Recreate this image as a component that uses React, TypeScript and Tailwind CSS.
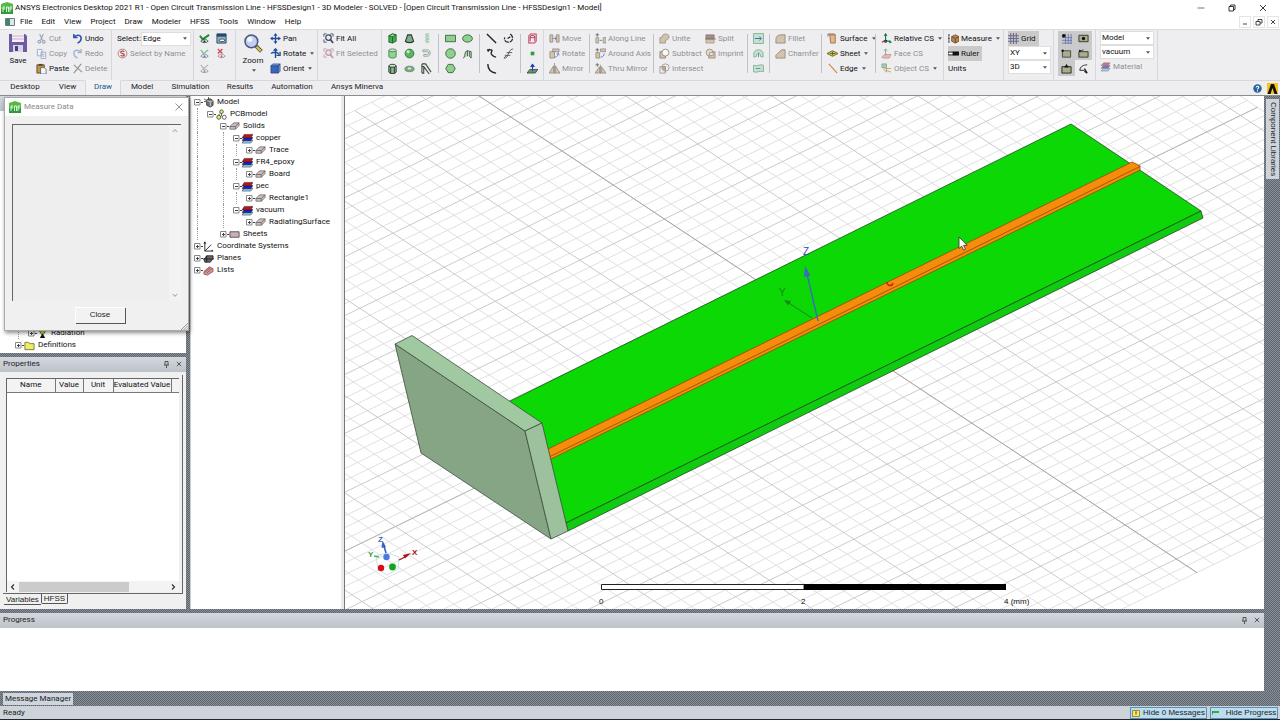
import React from "react";

const K = "#222";
const G = "#8ed08e";
const T = "#d3c3ad";

const solidIcon = (
  <g stroke="#555" strokeWidth=".7" fill="#c9bcbc">
    <path d="M1 9V6l4-4h6v3L7 9z" />
    <path d="M1 6h6v3M7 6l4-4" fill="none" />
  </g>
);

const icons: Record<string, React.ReactNode> = {
  cut: <g fill="none" stroke="#9aa7b8" strokeWidth="1.2"><path d="M4 1l3 7M8 1L5 8" /><circle cx="3.6" cy="9.5" r="1.5" /><circle cx="8.4" cy="9.5" r="1.5" /></g>,
  copy: <g fill="#eef2fa" stroke="#9fabc0"><path d="M1.500 1.500h5v7h-5zM5.500 4.500h5v7h-5z" /><path d="M7 7h2M7 9h2" /></g>,
  paste: <g><path d="M1 2h8v9H1z" fill="#c9982f" stroke="#333" strokeWidth=".8" /><path d="M3 1h4v2H3z" fill="#444" /><path d="M5 5h4l2 2v5H5z" fill="#f4f4ff" stroke="#445" strokeWidth=".7" /></g>,
  undo: <path d="M2 1v4h4M2 5c3-4 8-3 8 1 0 3-2 4-4 5" fill="none" stroke="#2b55b0" strokeWidth="1.7" />,
  redo: <path d="M10 1v4H6M10 5C7 1 2 2 2 6c0 3 2 4 4 5" fill="none" stroke="#a4b6d3" strokeWidth="1.600" />,
  del: <path d="M2 2l9 8M10 1L2 11" fill="none" stroke="#909090" strokeWidth="1.200" />,
  byname: <g fill="none"><circle cx="6" cy="6" r="4.800" stroke="#b06a6a" strokeWidth=".9" /><path d="M8 4c-1-1-4-1-4 .6S8 6 8 7.500 5 9 4 8" stroke="#a33" strokeWidth="1.200" /></g>,
  eyeOn: <g fill="none"><path d="M1 3l3 4 7-5" stroke="#1d8a3c" strokeWidth="2.200" /><path d="M2 9c2-3 6-3 8 0-2 2-6 2-8 0z" stroke="#2d5a3c" /><circle cx="6" cy="9" r="1.200" fill="#234" /></g>,
  eyeWin: <g><path d="M1 1h10v10H1z" fill="#8fb5c9" stroke="#234a66" /><path d="M1 1h10v3H1z" fill="#234a66" /><path d="M3 8c2-2 5-2 7 0-2 2-5 2-7 0z" fill="#fff" stroke="#222" strokeWidth=".8" /></g>,
  eyeGreen: <g fill="none"><path d="M2 2l3 4 5-4" stroke="#83c59a" strokeWidth="1.600" /><path d="M2 9c2-3 6-3 8 0-2 2-6 2-8 0z" stroke="#789" /><circle cx="6" cy="9" r="1" fill="#678" /></g>,
  eyeRed: <g fill="none"><path d="M2 1l5 5M7 1L2 6" stroke="#d0525e" strokeWidth="1.600" /><path d="M2 9c2-3 6-3 8 0-2 2-6 2-8 0z" stroke="#a88" /><circle cx="6" cy="9" r="1" fill="#a66" /></g>,
  eyeGray: <g fill="none"><path d="M2 2l3 4 5-4" stroke="#b5a8b2" strokeWidth="1.200" /><path d="M2 9c2-3 6-3 8 0-2 2-6 2-8 0z" stroke="#999" /><circle cx="6" cy="9" r="1" fill="#888" /></g>,
  pan: <g fill="#1f4e9a"><path d="M5.300 2h1.400v8H5.300zM2 5.300h8v1.400H2z" /><path d="M6 0l2.200 3H3.800zM6 12l2.200-3H3.800zM0 6l3-2.200v4.400zM12 6L9 3.800v4.400z" /></g>,
  rotate: <g fill="none" stroke="#1f4e9a" strokeWidth="1.500"><path d="M6 1v10M1 6c3-2 7-2 9 1" /><path d="M4 3l2-2 2 2M11 4v4H7" /></g>,
  orient: <g stroke="#1d3c78" strokeWidth=".7"><path d="M1 3h8v8H1z" fill="#3a68b8" /><path d="M1 3l2-2h8L9 3zM9 3l2-2v8l-2 2z" fill="#7a9cd8" /></g>,
  fitall: <g fill="none" stroke="#39465c"><path d="M1 4V1h3M8 1h3v3M1 7v3h3" strokeWidth=".9" /><circle cx="6" cy="5" r="3" strokeWidth="1.300" /><path d="M8 7l3 4" strokeWidth="1.800" /></g>,
  fitsel: <g fill="none" stroke="#bd9aa4"><path d="M1 4V1h3M8 1h3v3M1 7v3h3" strokeWidth=".9" /><circle cx="6" cy="5" r="3" strokeWidth="1.300" fill="#f0dde2" /><path d="M8 7l3 4" strokeWidth="1.800" /></g>,
  box: <g stroke="#174f1d" strokeWidth=".8"><path d="M2 3l4-2 4 1v7l-4 2-4-1z" fill="#3fae4a" /><path d="M2 3l4 1 4-2-4-1z" fill="#a9e3a9" /><path d="M6 4v7" /></g>,
  cone: <path d="M4 2h4l2.500 7c-2 2-7 2-9 0z" fill="#7fae87" stroke="#2c3c2e" strokeWidth="1.200" />,
  helix: <g fill="none" stroke="#a8cdae" strokeWidth="1.200"><path d="M9 1c-5 0-6 2 0 2M9 4c-5 0-6 2 0 2M9 7c-5 0-6 2 0 2M9 10H5" /></g>,
  cyl: <g stroke="#2f6b35" strokeWidth=".8"><path d="M2 2.500v7c1 2 7 2 8 0v-7" fill="#8fd495" /><ellipse cx="6" cy="2.500" rx="4" ry="1.500" fill="#cdeccd" /></g>,
  sphere: <g><circle cx="6" cy="6" r="4.800" fill="#56b661" stroke="#206128" strokeWidth=".8" /><circle cx="4.500" cy="4" r="1.700" fill="#c4efc6" /></g>,
  uturn: <path d="M2 2h5c4 0 4 7 0 7H3V7h4c2 0 2-3 0-3H2z" fill="#dfe8df" stroke="#93a896" />,
  prism: <g stroke={K} strokeWidth=".9" fill="#86bd8b"><path d="M2 3v7l2 1.500h4L10 10V3" /><path d="M2 3l2-1.500h4L10 3 8 4.500H4z" fill="#cfe8cf" /><path d="M4 4.500v7M8 4.500v7" /></g>,
  torus: <g><ellipse cx="6" cy="6.500" rx="5" ry="3" fill="#7fa886" stroke="#6e8a72" /><ellipse cx="6" cy="6" rx="2" ry="1" fill="#dcefdc" /></g>,
  bend: <path d="M1 1h4l6 9M1 1v10M1 4h2l6 8M1 11h2V5" fill="none" stroke="#3c4b3e" strokeWidth="1.200" />,
  rect: <path d="M.5 2.500h11v7H.5z" fill={G} stroke="#2e5a30" strokeWidth=".9" />,
  ellipse: <ellipse cx="6" cy="6" rx="5.300" ry="4" fill={G} stroke="#2e5a30" strokeWidth=".9" />,
  circle: <circle cx="6" cy="6" r="5.200" fill={G} stroke="#2e5a30" strokeWidth=".9" />,
  curveSheet: <g fill="#a9d6a9" stroke="#4b5b4c" strokeWidth="1"><path d="M1 11c3 0 1-8 5-8v6M6 3l4 1v7L8 9V4" /></g>,
  hexagon: <path d="M3.500 1.500h5L11.200 6l-2.700 4.500h-5L.8 6z" fill={G} stroke="#2e5a30" strokeWidth=".9" />,
  line: <path d="M1 1l10 10" stroke={K} strokeWidth="1.500" />,
  spiralc: <path d="M8 1c4 3 3 9-2 9-4 0-5-3-4-5M5 6l3-2" fill="none" stroke={K} strokeWidth="1.400" strokeDasharray="5 1" />,
  spline: <path d="M1 2h5c2 1-2 3 0 5s3 3 5 3M2 4l2-3" fill="none" stroke={K} strokeWidth="1.500" />,
  eq: <path d="M1 11c6 1 3-9 10-10M2 8h6M4 5l6 0M1 11l3-3" fill="none" stroke="#555" />,
  arc: <path d="M2 1c0 5 3 9 9 10" fill="none" stroke={K} strokeWidth="1.500" />,
  region: <g fill="none" stroke="#c23a58" strokeWidth="1.100"><path d="M2 3l2-2h6v8l-2 2H2z" /><ellipse cx="6" cy="4" rx="2.500" ry="1.200" /><path d="M3.500 4v5M8.500 4v5" /></g>,
  point: <path d="M4 4h4v4H4z" fill="#2f9c3f" />,
  plane: <g><path d="M0 11l3-4h9l-3 4z" fill="#5f9a66" stroke="#222" strokeWidth=".7" /><path d="M6 9V2M4 4l2-3 2 3z" stroke="#2336b8" fill="#2336b8" /></g>,
  move: <g fill={T} stroke="#8d8478" strokeWidth=".8"><path d="M1 2h3v8H1zM8 2h3v8H8z" /><path d="M4 6h4M6 4l2 2-2 2" stroke="#6870c8" fill="none" /></g>,
  rot: <g fill={T} stroke="#8d8478" strokeWidth=".8"><path d="M1 4h5v7H1zM4 1h7v3H4z" /><path d="M6 10c3 0 4-2 4-4M8 7l2-2 1 3" stroke="#5a62cc" fill="none" /></g>,
  mirror: <g fill={T} stroke="#8d8478" strokeWidth=".8"><path d="M5 3v8H0zM7 3v8h5z" /><path d="M6 0v12" /></g>,
  dupLine: <g fill={T} stroke="#7f9a84" strokeWidth=".8"><path d="M1 5h3v6H1zM9 5h3v6H9z" /><path d="M2.500 0v4M.5 2h4" stroke="#555" /><path d="M5 8h3" stroke="#4a52cc" /></g>,
  dupAxis: <g fill={T} stroke="#8d8478" strokeWidth=".8"><path d="M1 5h4v6H1zM6 1h6v3H6z" /><path d="M2.500 0v4M.5 2h4" stroke="#555" /><path d="M6 10c3 0 4-2 4-4" stroke="#4a52cc" fill="none" /></g>,
  dupMirror: <g fill={T} stroke="#8d8478" strokeWidth=".8"><path d="M5 4v7H0zM7 4v7h5z" /><path d="M6 2v10" /><path d="M2.500 0v4M.5 2h4" stroke="#555" /></g>,
  unite: <path d="M1 5h2c0-5 8-5 8-1 0 3-3 4-4 4v3H1z" fill={T} stroke="#9a8f80" strokeWidth=".9" />,
  subtract: <g stroke="#8a8378" strokeWidth=".9"><path d="M1 4h6v7H1z" fill={T} /><circle cx="7" cy="5" r="3.800" fill="#fafafa" /></g>,
  intersect: <g stroke="#9a9388" strokeWidth=".9"><circle cx="7" cy="5" r="4" fill="#eee" /><path d="M1 4h6v7H1z" fill="none" /><path d="M4 4h3v4c-2 0-3-2-3-4z" fill="#c6ae90" /></g>,
  split: <g strokeWidth=".8"><path d="M1 2h9v4H1z" fill="#a08f80" stroke="#877" /><path d="M1 7h9v4H1z" fill={T} stroke="#a98" /><path d="M0 6.500h12" stroke="#666" /></g>,
  imprint: <g stroke="#9a8f80" strokeWidth=".9"><path d="M4 4h7v7H4z" fill={T} /><circle cx="5" cy="5" r="3.800" fill="#e3d9ca" /><path d="M5 5h4v3H5z" fill="#f5f0e8" /></g>,
  sheetA: <g><path d="M.5.500h11v11H.5z" fill="#c3e3cd" stroke="#86b096" /><path d="M2 6h7M7 4l2 2-2 2" stroke="#4460c0" fill="none" /></g>,
  sheetB: <g fill="#c3e3cd" stroke="#86b096"><path d="M1 10V5c2-4 8-4 10 0v5l-3-1V7c-1-1-3-1-4 0v2z" /><path d="M6 5v5" stroke="#6a80c8" /></g>,
  sheetC: <g fill="#c3e3cd" stroke="#86b096"><path d="M.5 2.500c4 2 7-2 11 0v7c-4-2-7 2-11 0z" /><path d="M3 6h5" stroke="#6a80c8" /></g>,
  fillet: <path d="M1 11V7c0-3 2-5 5-5h5v9z" fill={T} stroke="#8f8678" strokeWidth=".9" />,
  chamfer: <path d="M1 11V8l6-6h4v9z" fill={T} stroke="#8f8678" strokeWidth=".9" />,
  surface: <g stroke="#7d5a35" strokeWidth=".8"><path d="M3 2h6v9H4z" fill="#e7b988" /><path d="M3 2L1 1v3M9 2L8 1H2" fill="none" /></g>,
  sheet: <path d="M0 6l6-3 6 3-6 3zM3 6h6M6 4v4" fill="#d8ce50" stroke="#59521a" strokeWidth=".9" />,
  edge: <path d="M2 1l9 10" stroke="#c48a3a" strokeWidth="1.200" />,
  rcs: <g fill="none" strokeWidth="1.300"><path d="M5 8V1M3.500 3L5 1l1.500 2" stroke="#1d7a50" /><path d="M5 8l6 2M9 8l2 2-2 1" stroke="#1b8a3a" /><path d="M5 8l-4 2" stroke="#c02020" /><circle cx="5" cy="9" r="1" stroke="#236" /></g>,
  fcs: <g fill="none" strokeWidth="1"><path d="M1 10l3-3h7l-2 4H2z" fill="#e8b9b0" stroke="#c99" /><path d="M5 8V1M3.500 3L5 1l1.500 2" stroke="#7aa890" /></g>,
  ocs: <g fill="none" strokeWidth="1"><path d="M1 1h5v4H1zM2 6l4 4" fill="#a8d0a8" stroke="#8a9" /><path d="M6 10V4M6 8l5 2M4 6h7" stroke="#c9a06a" /></g>,
  measure: <g stroke="#5a3d1c" strokeWidth=".8"><path d="M1 2v8M0 2h2M0 10h2M0 6h2" stroke="#333" /><path d="M4 4l4-2 4 2v5l-4 2-4-2z" fill="#b98650" /><path d="M4 4l4 2 4-2M8 6v5" fill="none" /></g>,
  ruler: <g><path d="M0 4.500h11.500v3H0z" fill="#fff" stroke="#111" /><path d="M5 4h7v4H5z" fill="#111" /></g>,
  grid: <g strokeWidth="1"><path d="M3 0v12M6 0v12M9 0v12" stroke="#8a4a6a" /><path d="M0 3h12M0 6h12M0 9h12" stroke="#4a6aa0" /></g>,
  snapGrid: <g strokeWidth="1"><path d="M5 1v11M8 1v11M11 1v11M1 5h11M1 8h11M1 11h11" stroke="#5868a8" strokeWidth=".8" /><circle cx="3" cy="3" r="2" fill="#111" /></g>,
  snapCenter: <g><path d="M1 2.500h10v7H1z" fill="#a9ad88" stroke="#333" /><circle cx="6" cy="6" r="1.800" fill="#111" /></g>,
  snapVertex: <g><path d="M1.500 3h9v7h-9z" fill="#a9ad88" stroke="#444" /><circle cx="1.800" cy="3" r="1.300" fill="#111" /></g>,
  snapEdge: <g><path d="M1 4h10v6H1z" fill="#a9ad88" stroke="#333" /><path d="M1 4l5-2" stroke="#333" /><circle cx="2" cy="3" r="1" fill="#111" /></g>,
  snapFace: <g><path d="M1 4h10v7H1z" fill="#a9ad88" stroke="#222" /><path d="M6 1l2.500 4h-5z" fill="#111" /></g>,
  snapArc: <g fill="none" stroke="#222"><path d="M2 8c0-4 4-6 8-6M2 8h5" /><path d="M7 6l3 5M7 9l3 2" strokeWidth="1.500" /></g>,
  material: <g strokeWidth=".5" stroke="#777"><path d="M1 11l3-3h7l-2 3z" fill="#a9c8e6" /><path d="M1 8l3-3h7L9 8z" fill="#6f78c8" /><path d="M1 5l3-3h7L9 5z" fill="#d8707a" /></g>,
  matTree: <g strokeWidth=".5" stroke="#111"><path d="M0 11l2.500-3H12l-2.500 3z" fill="#8fd0f5" /><path d="M0 8.500L2.500 5H12L9.500 8.500z" fill="#1a22c8" /><path d="M0 5.500L2.500 1.500H12L9.500 5.500z" fill="#b01818" /></g>,
  solid: solidIcon,
  sheets: <path d="M1 3h10v6H1z" fill="#cbb0b4" stroke="#444" strokeWidth=".9" />,
  modelTree: <g stroke="#222" strokeWidth=".8"><path d="M4 3l4-1 3 2v5l-3 2-4-2z" fill="#777" /><path d="M1 2l3 2M1 5h3M6 0v3" /><path d="M4 4l4 1 3-1M8 5v5" fill="none" stroke="#ddd" /></g>,
  pcb: <g stroke="#333" strokeWidth=".8"><circle cx="6" cy="3" r="2" fill="#e8e860" /><circle cx="3" cy="9" r="2.200" fill="#e8e860" /><circle cx="9" cy="9" r="2.200" fill="#fff" /><path d="M6 5v3M4 5L3 7" /></g>,
  csTree: <path d="M2 1v10h9M2 11l7-7M1 3l1-2 1 2M9 10l2 1" fill="none" stroke={K} strokeWidth="1" />,
  planes: <g stroke="#111" strokeWidth=".8"><path d="M1 7l3-4h7v3L8 10H2z" fill="#666" /><path d="M0 6.500h12M4 3v7" /></g>,
  lists: <g stroke="#733" strokeWidth=".7"><path d="M1 7l6-5 4 2v3l-6 4-4-1z" fill="#d89a9a" /><path d="M2 8l6-5M4 9l6-5" /></g>,
  radiation: <g><path d="M2 2h8L7 7H5z" fill="#d8d820" stroke="#222" strokeWidth=".7" /><path d="M3 11l3-5 3 5z" fill="#111" /></g>,
  folder: <path d="M1 10.500V2.500h4l1 1.500h5v6.500z" fill="#f0ee60" stroke="#6b6a30" strokeWidth=".9" />,
};

function Ic({ n }: { n: string }) {
  return (
    <svg viewBox="0 0 12 12" className="size-[11px] shrink-0" aria-hidden="true">
      {icons[n]}
    </svg>
  );
}

const Caret = () => (
  <svg viewBox="0 0 6 4" className="ml-[2px] h-[3px] w-[4px] shrink-0" aria-hidden="true">
    <path d="M0 0h6L3 4z" fill="#555" />
  </svg>
);

type Item = { i?: string; t: string; off?: boolean; c?: boolean; on?: boolean };

function Tool({ i, t, off, c, on }: Item) {
  return (
    <button
      type="button"
      className={`flex h-[15px] items-center gap-[2px] whitespace-nowrap ${off ? "text-[#8f8f8f]" : "text-[#111]"} ${on ? "bg-[#cacaca] pr-[3px]" : ""}`}
    >
      {i && <Ic n={i} />}
      {t}
      {c && <Caret />}
    </button>
  );
}

function Col({ items, w }: { items: Item[]; w: string }) {
  return (
    <div className={`flex shrink-0 flex-col items-start ${w}`}>
      {items.map((x) => (
        <Tool key={x.t} {...x} />
      ))}
    </div>
  );
}

function IconGrid({ rows, label }: { rows: string[][]; label: string }) {
  return (
    <div className="flex shrink-0 flex-col" role="group" aria-label={label}>
      {rows.map((r, k) => (
        <div key={k} className="flex">
          {r.map((n) => (
            <button type="button" key={n} aria-label={n} className="flex h-[15px] w-[17px] items-center justify-center">
              <Ic n={n} />
            </button>
          ))}
        </div>
      ))}
    </div>
  );
}

const Bar = () => <div className="mt-[3px] h-[39px] w-px shrink-0 bg-[#bfc3c9]" />;

function Group({ children, w }: { children: React.ReactNode; w: string }) {
  return <div className={`flex shrink-0 border-r border-[#d5d7dc] pt-px ${w}`}>{children}</div>;
}

function Pick({ label, options, w }: { label: string; options: string[]; w: string }) {
  return (
    <div className={`relative flex h-[14px] items-center border border-[#dedede] bg-white ${w}`}>
      <select aria-label={label} className="h-full w-full appearance-none bg-transparent pl-px text-[#111] outline-none">
        {options.map((o) => (
          <option key={o}>{o}</option>
        ))}
      </select>
      <span className="pointer-events-none absolute right-[3px]">
        <Caret />
      </span>
    </div>
  );
}

function Logo() {
  return (
    <svg viewBox="0 0 12 12" className="size-[12px] shrink-0" aria-hidden="true">
      <path d="M0 2l6-2 6 2v10H0z" fill="#58b947" />
      <path d="M0 7h12v5H0z" fill="#2f9a3c" />
      <path d="M2 5v5M2 5h2M2 7h2M5.500 10V5h2v5M9 10V5h2M9 7h2" stroke="#e8ffe8" strokeWidth=".9" fill="none" />
    </svg>
  );
}

function Ribbon() {
  return (
    <div className="flex h-[51px] shrink-0 overflow-hidden border-t border-[#dcdcdf] bg-[#eeeef1]">
      <Group w="w-[112px]">
        <button type="button" className="flex w-[36px] flex-col items-center gap-[3px] pt-[3px] text-[#111]">
          <svg viewBox="0 0 18 18" className="size-[18px]" aria-hidden="true">
            <path d="M0 0h16l2 2v16H0z" fill="#6d5ba8" />
            <path d="M3 0h12v8H3z" fill="#f3eff8" />
            <path d="M3 2h12M3 5h12" stroke="#d9a9c8" />
            <path d="M4 11h10v7H4z" fill="#d5d5e4" />
            <path d="M6 12h3v5H6z" fill="#4d4080" />
          </svg>
          Save
        </button>
        <Col w="w-[36px]" items={[{ i: "cut", t: "Cut", off: true }, { i: "copy", t: "Copy", off: true }, { i: "paste", t: "Paste" }]} />
        <Col w="w-[38px]" items={[{ i: "undo", t: "Undo" }, { i: "redo", t: "Redo", off: true }, { i: "del", t: "Delete", off: true }]} />
      </Group>
      <Group w="w-[82px]">
        <div className="flex flex-col pl-[5px]">
          <div className="flex h-[15px] items-center text-[#111]">
            <span className="w-[24px]">Select:</span>
            <Pick label="Select" options={["Edge", "Face", "Object"]} w="w-[50px]" />
          </div>
          <Tool i="byname" t="Select by Name" off />
        </div>
      </Group>
      <Group w="w-[42px]">
        <div className="pl-[2px]">
          <IconGrid label="Visibility" rows={[["eyeOn", "eyeWin"], ["eyeGreen", "eyeRed"], ["eyeGray"]]} />
        </div>
      </Group>
      <Group w="w-[82px]">
        <button type="button" className="flex w-[34px] flex-col items-center gap-[3px] pt-[3px] text-[#111]">
          <svg viewBox="0 0 18 18" className="size-[19px]" aria-hidden="true">
            <circle cx="7" cy="7" r="6" fill="#c3cff2" stroke="#4a5a86" strokeWidth="1.500" />
            <circle cx="5.500" cy="5" r="2.500" fill="#f2f6ff" />
            <path d="M11.500 11.500l5 5" stroke="#5d5530" strokeWidth="3.600" />
            <path d="M12 12l4 4" stroke="#d8c860" strokeWidth="2" />
          </svg>
          <span className="leading-[10px]">Zoom</span>
          <Caret />
        </button>
        <Col w="w-[46px]" items={[{ i: "pan", t: "Pan" }, { i: "rotate", t: "Rotate", c: true }, { i: "orient", t: "Orient", c: true }]} />
      </Group>
      <Group w="w-[64px]">
        <div className="pl-[5px]">
          <Col w="w-[58px]" items={[{ i: "fitall", t: "Fit All" }, { i: "fitsel", t: "Fit Selected", off: true }]} />
        </div>
      </Group>
      <Group w="w-[162px]">
        <div className="flex gap-[3px] pl-[2px]">
          <IconGrid label="Draw solids" rows={[["box", "cone", "helix"], ["cyl", "sphere", "uturn"], ["prism", "torus", "bend"]]} />
          <Bar />
          <IconGrid label="Draw sheets" rows={[["rect", "ellipse"], ["circle", "curveSheet"], ["hexagon"]]} />
          <Bar />
          <IconGrid label="Draw lines" rows={[["line", "spiralc"], ["spline", "eq"], ["arc"]]} />
          <Bar />
          <IconGrid label="Region" rows={[["region"], ["point"], ["plane"]]} />
        </div>
      </Group>
      <Group w="w-[400px]">
        <div className="flex gap-[5px] pl-[5px]">
          <Col w="w-[35px]" items={[{ i: "move", t: "Move", off: true }, { i: "rot", t: "Rotate", off: true }, { i: "mirror", t: "Mirror", off: true }]} />
          <Bar />
          <Col w="w-[53px]" items={[{ i: "dupLine", t: "Along Line", off: true }, { i: "dupAxis", t: "Around Axis", off: true }, { i: "dupMirror", t: "Thru Mirror", off: true }]} />
          <Bar />
          <Col w="w-[41px]" items={[{ i: "unite", t: "Unite", off: true }, { i: "subtract", t: "Subtract", off: true }, { i: "intersect", t: "Intersect", off: true }]} />
          <Col w="w-[37px]" items={[{ i: "split", t: "Split", off: true }, { i: "imprint", t: "Imprint", off: true }]} />
          <Bar />
          <div className="flex w-[11px] flex-col">
            {["sheetA", "sheetB", "sheetC"].map((n) => (
              <button type="button" key={n} aria-label={n} className="flex h-[15px] items-center">
                <Ic n={n} />
              </button>
            ))}
          </div>
          <Bar />
          <Col w="w-[41px]" items={[{ i: "fillet", t: "Fillet", off: true }, { i: "chamfer", t: "Chamfer", off: true }]} />
          <Bar />
          <Col w="w-[43px]" items={[{ i: "surface", t: "Surface", c: true }, { i: "sheet", t: "Sheet", c: true }, { i: "edge", t: "Edge", c: true }]} />
          <Bar />
          <Col w="w-[58px]" items={[{ i: "rcs", t: "Relative CS", c: true }, { i: "fcs", t: "Face CS", off: true }, { i: "ocs", t: "Object CS", off: true, c: true }]} />
        </div>
      </Group>
      <Group w="w-[60px]">
        <div className="pl-[4px]">
          <Col w="w-[54px]" items={[{ i: "measure", t: "Measure", c: true }, { i: "ruler", t: "Ruler", on: true }, { t: "Units" }]} />
        </div>
      </Group>
      <Group w="w-[50px]">
        <div className="flex flex-col items-start pl-[4px]">
          <Tool i="grid" t="Grid" on />
          <Pick label="Drawing plane" options={["XY", "YZ", "XZ"]} w="w-[43px]" />
          <Pick label="Movement mode" options={["3D", "In Plane"]} w="w-[43px]" />
        </div>
      </Group>
      <Group w="w-[42px]">
        <div className="ml-[4px] h-[45px] w-[34px] bg-[linear-gradient(#cacaca,#cacaca),linear-gradient(#cacaca,#cacaca)] bg-[length:34px_29px,17px_45px] bg-no-repeat">
          <IconGrid label="Snapping" rows={[["snapGrid", "snapCenter"], ["snapVertex", "snapEdge"], ["snapFace", "snapArc"]]} />
        </div>
      </Group>
      <Group w="w-[62px]">
        <div className="flex flex-col items-start pl-[4px]">
          <Pick label="Object kind" options={["Model", "Non Model"]} w="w-[54px]" />
          <Pick label="Default material" options={["vacuum", "copper", "pec"]} w="w-[54px]" />
          <Tool i="material" t="Material" off />
        </div>
      </Group>
    </div>
  );
}

type Node = { d: string; i: string; t: string; open?: boolean };

const modelTree: Node[] = [
  { d: "", i: "modelTree", t: "Model", open: true },
  { d: "|", i: "pcb", t: "PCBmodel", open: true },
  { d: "| ", i: "solid", t: "Solids", open: true },
  { d: "| |", i: "matTree", t: "copper", open: true },
  { d: "| ||", i: "solid", t: "Trace" },
  { d: "| |", i: "matTree", t: "FR4_epoxy", open: true },
  { d: "| ||", i: "solid", t: "Board" },
  { d: "| |", i: "matTree", t: "pec", open: true },
  { d: "| ||", i: "solid", t: "Rectangle1" },
  { d: "| |", i: "matTree", t: "vacuum", open: true },
  { d: "| | ", i: "solid", t: "RadiatingSurface" },
  { d: "| ", i: "sheets", t: "Sheets" },
  { d: "", i: "csTree", t: "Coordinate Systems" },
  { d: "", i: "planes", t: "Planes" },
  { d: "", i: "lists", t: "Lists" },
];

function Tree({ nodes, label }: { nodes: Node[]; label: string }) {
  return (
    <ul role="tree" aria-label={label}>
      {nodes.map((n) => (
        <li key={n.t} role="treeitem" aria-expanded={!!n.open} className="flex h-[12px] items-center whitespace-nowrap text-[#111]">
          {n.d.split("").map((g, k) => (
            <span key={k} className="flex h-full w-[13px] shrink-0 pl-[3px]">
              {g === "|" && <span className="border-l border-dotted border-[#999]" />}
            </span>
          ))}
          <svg viewBox="0 0 9 7" className="h-[7px] w-[9px] shrink-0" aria-hidden="true">
            <path d="M.5.500h5.500v5.500H.5z" fill="#fff" stroke="#888" />
            <path d={n.open ? "M2 3.500h3M7 3.500h2" : "M2 3.500h3M3.500 2v3M7 3.500h2"} stroke="#444" />
          </svg>
          <Ic n={n.i} />
          <span className="pl-[3px]">{n.t}</span>
        </li>
      ))}
    </ul>
  );
}

const hatch = "bg-[repeating-conic-gradient(#5f656d_0_25%,#8a9099_0_50%)] bg-[length:2px_2px]";

function PanelHead({ title, name }: { title?: string; name: string }) {
  return (
    <div className="flex h-[15px] shrink-0 items-center bg-gradient-to-b from-[#d3d9df] to-[#bcc2c6] pr-[4px] pb-px pl-[3px] text-[#222]">
      <h2 className="flex-1">{title}</h2>
      <button type="button" aria-label={`Pin ${name}`} className="mr-[6px]">
        <svg viewBox="0 0 7 7" className="size-[7px]" aria-hidden="true">
          <path d="M2 .500h3v3.500M2 .500v3.500M1 4h5M3.500 4v3" stroke="#444" strokeWidth=".9" fill="none" />
        </svg>
      </button>
      <button type="button" aria-label={`Close ${name}`}>
        <svg viewBox="0 0 7 7" className="size-[6px]" aria-hidden="true">
          <path d="M1 1l5 5M6 1L1 6" stroke="#444" fill="none" />
        </svg>
      </button>
    </div>
  );
}

function Properties() {
  const cols = [
    ["Name", "w-[48px]"],
    ["Value", "w-[28px]"],
    ["Unit", "w-[30px]"],
    ["Evaluated Value", "w-[58px]"],
  ];
  return (
    <section className="flex min-h-0 flex-1 flex-col bg-[#f0f0f0]">
      <PanelHead title="Properties" name="Properties" />
      <div className="mx-[3px] mt-[3px] flex min-h-0 flex-1 flex-col border-r border-b border-[#666] p-[3px] pb-[1px]">
        <div className="flex min-h-0 flex-1 flex-col border-t border-l border-[#666] bg-white">
          <table className="w-full table-fixed border-collapse text-[#111]">
            <thead>
              <tr className="h-[13px] bg-[#f3f3f3]">
                {cols.map(([c, w]) => (
                  <th key={c} className={`border-r border-b border-[#777] p-0 text-center font-normal whitespace-nowrap ${w}`}>
                    {c}
                  </th>
                ))}
                <th className="border-b border-[#777] p-0" />
              </tr>
            </thead>
          </table>
          <div className="flex-1" />
          <div className="flex h-[11px] items-center bg-[#f3f3f3]">
            <button type="button" aria-label="Scroll left" className="flex w-[12px] justify-center">
              <svg viewBox="0 0 6 6" className="size-[6px]"><path d="M4 .500L1.500 3 4 5.500" fill="none" stroke="#333" strokeWidth="1.200" /></svg>
            </button>
            <div className="h-[10px] flex-1">
              <div className="h-full w-[74%] bg-[#cbcbcb]" />
            </div>
            <button type="button" aria-label="Scroll right" className="flex w-[12px] justify-center">
              <svg viewBox="0 0 6 6" className="size-[6px]"><path d="M2 .500L4.500 3 2 5.500" fill="none" stroke="#333" strokeWidth="1.200" /></svg>
            </button>
          </div>
        </div>
      </div>
      <div className="flex h-[15px] items-start pl-[4px] font-['Liberation_Sans',sans-serif] text-[#222]">
        <button type="button" className="h-[11px] w-[37px] border-b border-[#555] leading-[11px]">Variables</button>
        <button type="button" className="h-[10px] w-[27px] rounded-b-[2px] border-r border-b border-l border-[#555] leading-[9px]">HFSS</button>
      </div>
    </section>
  );
}

function MeasureDialog() {
  return (
    <div role="dialog" aria-label="Measure Data" className="absolute top-[1px] left-[4px] z-10 flex h-[234px] w-[185px] flex-col border border-[#aaa] bg-[#f0f0f0] shadow-[1px_2px_4px_rgba(0,0,0,0.45)]">
      <div className="flex h-[18px] shrink-0 items-center gap-[3px] bg-white pr-[5px] pl-[4px] text-[#8a8a8a]">
        <Logo />
        <span className="flex-1">Measure Data</span>
        <button type="button" aria-label="Close window">
          <svg viewBox="0 0 8 8" className="size-[8px]"><path d="M.5.500l7 7M7.500.500l-7 7" stroke="#888" strokeWidth=".9" /></svg>
        </button>
      </div>
      <div className="mx-[7px] mt-[8px] flex h-[177px] border-t border-l border-[#666] bg-[#eee]">
        <textarea aria-label="Measurements" readOnly className="flex-1 resize-none bg-transparent outline-none" />
        <div className="flex w-[12px] flex-col items-center justify-between bg-[#f3f3f3] py-[3px]">
          <svg viewBox="0 0 8 6" className="h-[5px] w-[6px]"><path d="M1 5l3-3 3 3" fill="none" stroke="#aaa" strokeWidth="1.400" /></svg>
          <svg viewBox="0 0 8 6" className="h-[5px] w-[6px]"><path d="M1 1l3 3 3-3" fill="none" stroke="#aaa" strokeWidth="1.400" /></svg>
        </div>
      </div>
      <div className="flex flex-1 items-center justify-center pl-[8px]">
        <button type="button" className="h-[16px] w-[50px] border-r border-b border-[#555] bg-[#f2f2f2] font-['Liberation_Sans',sans-serif] text-[#222] shadow-[-1px_-1px_0_#fff]">
          Close
        </button>
      </div>
      <svg viewBox="0 0 8 8" className="absolute right-0 bottom-0 size-[7px]" aria-hidden="true">
        <path d="M0 8l8-8M3 8l5-5M6 8l2-2" stroke="#888" />
      </svg>
    </div>
  );
}

const O = { x: 818, y: 321 };
const at = (a: number, b: number) => `${(O.x + 84.5 * a + 51.2 * b).toFixed(1)} ${(O.y - 41.1 * a + 34 * b).toFixed(1)}`;
const gridLines = (major: boolean) => {
  const out: string[] = [];
  for (let k = -37; k <= 37; k++) {
    if ((k % 5 === 0) !== major) continue;
    out.push(`M${at(-8, k / 5)}L${at(5.2, k / 5)}`);
    if (k <= 26) out.push(`M${at(k / 5, -7.4)}L${at(k / 5, 7.4)}`);
  }
  return out.join("");
};

function Scene() {
  return (
    <svg viewBox="345 96 919 513" preserveAspectRatio="xMidYMid slice" className="absolute inset-0 size-full bg-white" role="img" aria-label="3D model view">
      <path d={gridLines(false)} stroke="#dcdcdc" strokeWidth=".9" fill="none" />
      <path d={gridLines(true)} stroke="#c4c4c4" strokeWidth=".9" fill="none" />
      <path d={`M${at(0, -7.4)}L${at(0, 7.4)}`} stroke="#b3a4a6" />
      <path d={`M${at(-8, 0)}L${at(5.2, 0)}`} stroke="#b4c0b0" />
      <g stroke="#1c4a1c" strokeWidth=".8" strokeLinejoin="round">
        <path d="M500 406L1071 124L1201 211L566 523z" fill="#0bd805" />
        <path d="M566 523L1201 211L1203 218L568 531z" fill="#10cc10" />
      </g>
      <g stroke="#8a4a10" strokeWidth=".8">
        <path d="M546 450L1132 162L1140 166L1140 170L549 460z" fill="#f68c0a" />
        <path d="M549 457L1140 166.500" fill="none" />
      </g>
      <g stroke="#3c4d3c" strokeWidth=".8" strokeLinejoin="round">
        <path d="M395 344L525 431L551 539L421 453z" fill="#86a584" />
        <path d="M395 344L412 335.500L542 423L525 431z" fill="#a1c9a1" />
        <path d="M525 431L542 423L568 531L551 539z" fill="#9dc19d" />
      </g>
      <path d="M818 321L807 274" stroke="#3c6ac0" strokeWidth="1.400" />
      <path d="M805 266l-1 11 6.500-1.500z" fill="#3c6ac0" />
      <path d="M812 318L788 302.500" stroke="#16891a" />
      <path d="M784 300l7 1-3 4.500z" fill="#16891a" />
      <g fontFamily="Liberation Sans, sans-serif">
        <text x="803" y="255" fontSize="10" fill="#2a50b8">Z</text>
        <text x="779" y="296" fontSize="10" fill="#16891a">Y</text>
        <g fontSize="8" fontWeight="bold">
          <text x="378" y="542" fill="#4a68c0">Z</text>
          <text x="368" y="557" fill="#3a9a3a">Y</text>
          <text x="412" y="555" fill="#b01020">X</text>
        </g>
        <g fontSize="8" fill="#111">
          <text x="599" y="604">0</text>
          <text x="801" y="604">2</text>
          <text x="1004" y="604">4 (mm)</text>
        </g>
      </g>
      <path d="M887 282c0 4 5 5 6 1" fill="none" stroke="#d81a10" strokeWidth="1.400" />
      <path d="M376 556l11-3 12 4-1 12-11 6-9-6zM387 553v3" fill="none" stroke="#b5dce4" strokeWidth=".8" />
      <path d="M386 553l-2-7" stroke="#3a60c0" strokeWidth="1.600" />
      <path d="M382.500 540.500l-1 7.500 4.500-1z" fill="#3a60c0" />
      <path d="M399 560l6-3" stroke="#b01020" strokeWidth="1.200" />
      <path d="M411 553l-8 2 2 3.500z" fill="#b01020" />
      <path d="M379 557l-5-1" stroke="#58b058" strokeWidth="1.500" />
      <circle cx="386.500" cy="557" r="3.200" fill="#4a78e0" />
      <circle cx="381" cy="568" r="3.200" fill="#dc0c14" />
      <circle cx="392.500" cy="567" r="3.400" fill="#12a41c" />
      <path d="M601.500 584.500H804v5H601.500z" fill="#fff" stroke="#222" />
      <path d="M804 584h202v6H804z" fill="#000" />
      <path d="M959 237v11.500l2.700-2.400 1.800 4 1.900-.9-1.800-3.900h3.600z" fill="#fff" stroke="#333" strokeWidth=".8" />
    </svg>
  );
}

export default function App() {
  const menus = ["File", "Edit", "View", "Project", "Draw", "Modeler", "HFSS", "Tools", "Window", "Help"];
  const tabs = [
    ["Desktop", "w-[50px]"],
    ["View", "w-[35px]"],
    ["Draw", "w-[36px]"],
    ["Model", "w-[42px]"],
    ["Simulation", "w-[55px]"],
    ["Results", "w-[44px]"],
    ["Automation", "w-[60px]"],
    ["Ansys Minerva", "w-[70px]"],
  ];
  return (
    <div className="flex h-screen flex-col overflow-hidden bg-[#eeeef0] font-[Roboto,'Open_Sans',sans-serif] text-[8px] leading-[12px]">
      <header className="flex h-[15px] shrink-0 items-center bg-white pl-px text-[#111]">
        <Logo />
        <h1 className="flex-1 pl-[2px] whitespace-nowrap">
          ANSYS Electronics Desktop 2021 R1 - Open Circuit Transmission Line - HFSSDesign1 - 3D Modeler - SOLVED - [Open Circuit Transmission Line - HFSSDesign1 - Model]
        </h1>
        <div className="flex items-center gap-[23px] pr-[13px]">
          <button type="button" aria-label="Minimize"><svg viewBox="0 0 8 8" className="size-[8px]"><path d="M.5 4h7" stroke="#777" /></svg></button>
          <button type="button" aria-label="Restore"><svg viewBox="0 0 8 8" className="size-[8px]"><path d="M1 2.500h4.500V7H1zM2.500 2.500V1H7v4.500H5.500" fill="none" stroke="#222" strokeWidth=".9" /></svg></button>
          <button type="button" aria-label="Close"><svg viewBox="0 0 8 8" className="size-[8px]"><path d="M1 1l6 6M7 1L1 7" stroke="#222" strokeWidth=".9" /></svg></button>
        </div>
      </header>
      <nav className="flex h-[14px] shrink-0 items-center bg-white pl-[5px] text-[#111]">
        <svg viewBox="0 0 10 8" className="mr-[5px] h-[8px] w-[10px]" aria-hidden="true">
          <path d="M.5.500h9v7h-9z" fill="#dce8ee" stroke="#6a7a86" />
          <path d="M1 1h4v6H1z" fill="#3d8a6a" />
        </svg>
        <div className="flex flex-1 gap-[9px]">
          {menus.map((m) => (
            <button type="button" key={m}>{m}</button>
          ))}
        </div>
        <div className="flex gap-[2px] pr-px">
          {["M2 6h4", "M1 3.500h4V7H1zM3 3.500V1.500h4V5H5", "M2 2l4 4M6 2L2 6"].map((d, k) => (
            <button type="button" key={d} aria-label={["Minimize design", "Restore design", "Close design"][k]} className="flex size-[12px] items-center justify-center border border-[#e4e4e4]">
              <svg viewBox="0 0 8 8" className="size-[8px]"><path d={d} fill="none" stroke="#444" /></svg>
            </button>
          ))}
        </div>
      </nav>
      <Ribbon />
      <div className="flex h-[16px] shrink-0 items-stretch border-b border-[#8c8c8c] text-[#222]">
        {tabs.map(([t, w]) => (
          <button
            type="button"
            key={t}
            className={`shrink-0 border-t pb-[2px] text-center whitespace-nowrap ${w} ${t === "Draw" ? "border-x border-x-[#d5d7dc] border-t-transparent bg-[#f2f2f5] text-[#1a5a8e]" : "border-t-[#d5d7dc]"}`}
          >
            {t}
          </button>
        ))}
        <div className="flex flex-1 items-center justify-end gap-[5px] border-t border-[#d5d7dc] pr-[2px]">
          <button type="button" aria-label="Help">
            <svg viewBox="0 0 10 10" className="size-[9px]"><circle cx="5" cy="5" r="4.700" fill="#27639e" /><path d="M3.500 4c0-2 3-2 3-.3C6.500 5 5 4.800 5 6.200M5 7v1.200" fill="none" stroke="#fff" strokeWidth="1.200" /></svg>
          </button>
          <svg viewBox="0 0 11 11" className="size-[11px]" aria-hidden="true">
            <path d="M0 0h11v11H0z" fill="#f5c518" />
            <path d="M4 1h3l3.500 10h-3L5.500 5 3.500 11h-3z" fill="#111" />
          </svg>
        </div>
      </div>

      <div className={`flex min-h-0 flex-1 ${hatch}`}>
        <div className="flex min-w-0 flex-1 flex-col">
          <main className="relative flex min-h-0 flex-1">
            <div className="flex w-[186px] shrink-0 flex-col">
              <section className="flex h-[257px] shrink-0 flex-col justify-between bg-white pb-[2px]" aria-label="Project Manager">
                <PanelHead name="Project Manager" />
                <div className="pl-[15px]">
                  <Tree label="Project" nodes={[{ d: "|", i: "radiation", t: "Radiation" }, { d: "", i: "folder", t: "Definitions" }]} />
                </div>
              </section>
              <div className="h-[4px] shrink-0" />
              <Properties />
            </div>
            <div className="w-[4px] shrink-0" />
            <section className="w-[151px] shrink-0 border-l border-[#ccc] bg-white pl-[3px]" aria-label="Model tree">
              <Tree label="Model" nodes={modelTree} />
            </section>
            <div className="w-[4px] shrink-0 border-r border-[#777] bg-[#e9e9e9]" />
            <section className="relative min-w-0 flex-1 overflow-hidden bg-white" aria-label="Modeler">
              <Scene />
            </section>
            <MeasureDialog />
          </main>
          <div className="h-[4px] shrink-0" />
          <section className="flex h-[78px] shrink-0 flex-col bg-white">
            <PanelHead title="Progress" name="Progress" />
          </section>
        </div>
        <aside className="w-[16px] shrink-0 pt-[3px] pl-[2px]">
          <button type="button" className="flex h-[80px] w-[13px] items-center justify-center bg-[#cdd4dc] font-['Liberation_Sans',sans-serif] whitespace-nowrap text-[#222] [writing-mode:vertical-rl]">
            Component Libraries
          </button>
        </aside>
      </div>

      <div className={`flex h-[15px] shrink-0 items-center pl-[3px] ${hatch}`}>
        <button type="button" className="flex h-[12px] items-center bg-[#cfd5dd] px-[2px] text-[#222]">Message Manager</button>
      </div>
      <footer className="flex h-[14px] shrink-0 items-center border-b border-[#23272b] bg-[#ccd4d9] pr-[2px] pl-[3px] text-[#222]">
        <span className="flex-1">Ready</span>
        <div className="flex gap-[3px] font-['Liberation_Sans',sans-serif]">
          <button type="button" className="flex h-[12px] w-[77px] items-center justify-center gap-[3px] border border-[#5a90b8] bg-[#bcdcf0] whitespace-nowrap">
            <svg viewBox="0 0 8 8" className="size-[8px]" aria-hidden="true"><path d="M.5 1.500h7v6h-7z" fill="#f4e680" stroke="#a08c20" /><path d="M4 3v3M5 3H3" stroke="#665a10" strokeWidth=".8" /></svg>
            Hide 0 Messages
          </button>
          <button type="button" className="flex h-[12px] w-[68px] items-center justify-center gap-[6px] border border-[#5a90b8] bg-[#bcdcf0] whitespace-nowrap">
            <svg viewBox="0 0 8 8" className="size-[8px]" aria-hidden="true"><path d="M0 2h7v2H0z" fill="#27b33c" /><path d="M0 2v4" stroke="#555" /></svg>
            Hide Progress
          </button>
        </div>
      </footer>
    </div>
  );
}
